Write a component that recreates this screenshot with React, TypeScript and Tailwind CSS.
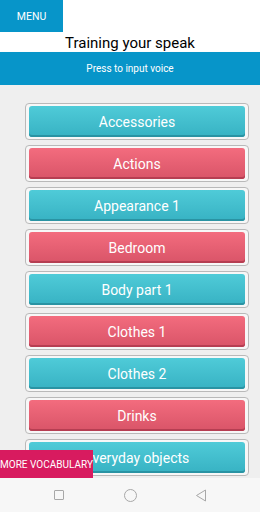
import React from "react";

const topics = [
	{ label: "Accessories", tone: "teal" },
	{ label: "Actions", tone: "red" },
	{ label: "Appearance 1", tone: "teal" },
	{ label: "Bedroom", tone: "red" },
	{ label: "Body part 1", tone: "teal" },
	{ label: "Clothes 1", tone: "red" },
	{ label: "Clothes 2", tone: "teal" },
	{ label: "Drinks", tone: "red" },
	{ label: "Everyday objects", tone: "teal" },
];

function TopicButton({ label, tone }: { label: string; tone: string }) {
	const face =
		tone === "teal"
			? "bg-gradient-to-b from-[#4fcbd8] to-[#37b2c3] shadow-[inset_0_-2px_0_#2a93a3]"
			: "bg-gradient-to-b from-[#f36c7e] to-[#d95468] shadow-[inset_0_-2px_0_#b63e52]";
	return (
		<div className="h-[37px] shrink-0 rounded-[4px] border border-[#b9b9b9] bg-[#f7f7f7] px-[3px] pt-[2px] pb-[2px]">
			<div
				className={`flex h-full items-center justify-center rounded-[3px] pt-[1px] text-[14px] text-white ${face}`}
			>
				{label}
			</div>
		</div>
	);
}

export default function App() {
	return (
		<div className="relative flex h-[512px] w-[260px] flex-col overflow-hidden bg-white font-['Roboto',sans-serif]">
			<div className="flex h-8 shrink-0">
				<button className="flex w-[63px] items-center justify-center pt-[1px] bg-[#0795c9] text-[10.5px] text-white">
					MENU
				</button>
			</div>
			<div className="flex h-5 shrink-0 items-center justify-center pt-[2px] text-[15px] text-black">
				Training your speak
			</div>
			<div className="flex h-[33px] shrink-0 items-center justify-center bg-[#0795c9] text-[10px] text-white shadow-[0_1px_2px_rgba(0,0,0,0.15)]">
				Press to input voice
			</div>
			<div className="flex flex-1 flex-col gap-[5px] overflow-hidden bg-[#efefef] pt-[18px] pr-[11px] pl-[25px]">
				{topics.map((t) => (
					<TopicButton key={t.label} label={t.label} tone={t.tone} />
				))}
			</div>
			<div className="flex h-[34px] shrink-0 items-center justify-center bg-[#f7f7f7]">
				<div className="flex w-[71px] justify-center">
					<span className="h-[10px] w-[10px] rounded-[1px] border border-[#a8a8a8]" />
				</div>
				<div className="flex w-[71px] justify-center">
					<span className="h-[13px] w-[13px] rounded-full border border-[#a8a8a8]" />
				</div>
				<div className="flex w-[71px] justify-center">
					<svg width="12" height="13" viewBox="0 0 12 13" fill="none">
						<path d="M10.5 1 L1.5 6.5 L10.5 12 Z" stroke="#a8a8a8" strokeWidth="1" strokeLinejoin="round" />
					</svg>
				</div>
			</div>
			<button className="absolute bottom-[34px] left-0 flex h-[28px] w-[93px] items-center justify-center bg-[#d81b5f] text-[10px] text-white">
				MORE VOCABULARY
			</button>
		</div>
	);
}
